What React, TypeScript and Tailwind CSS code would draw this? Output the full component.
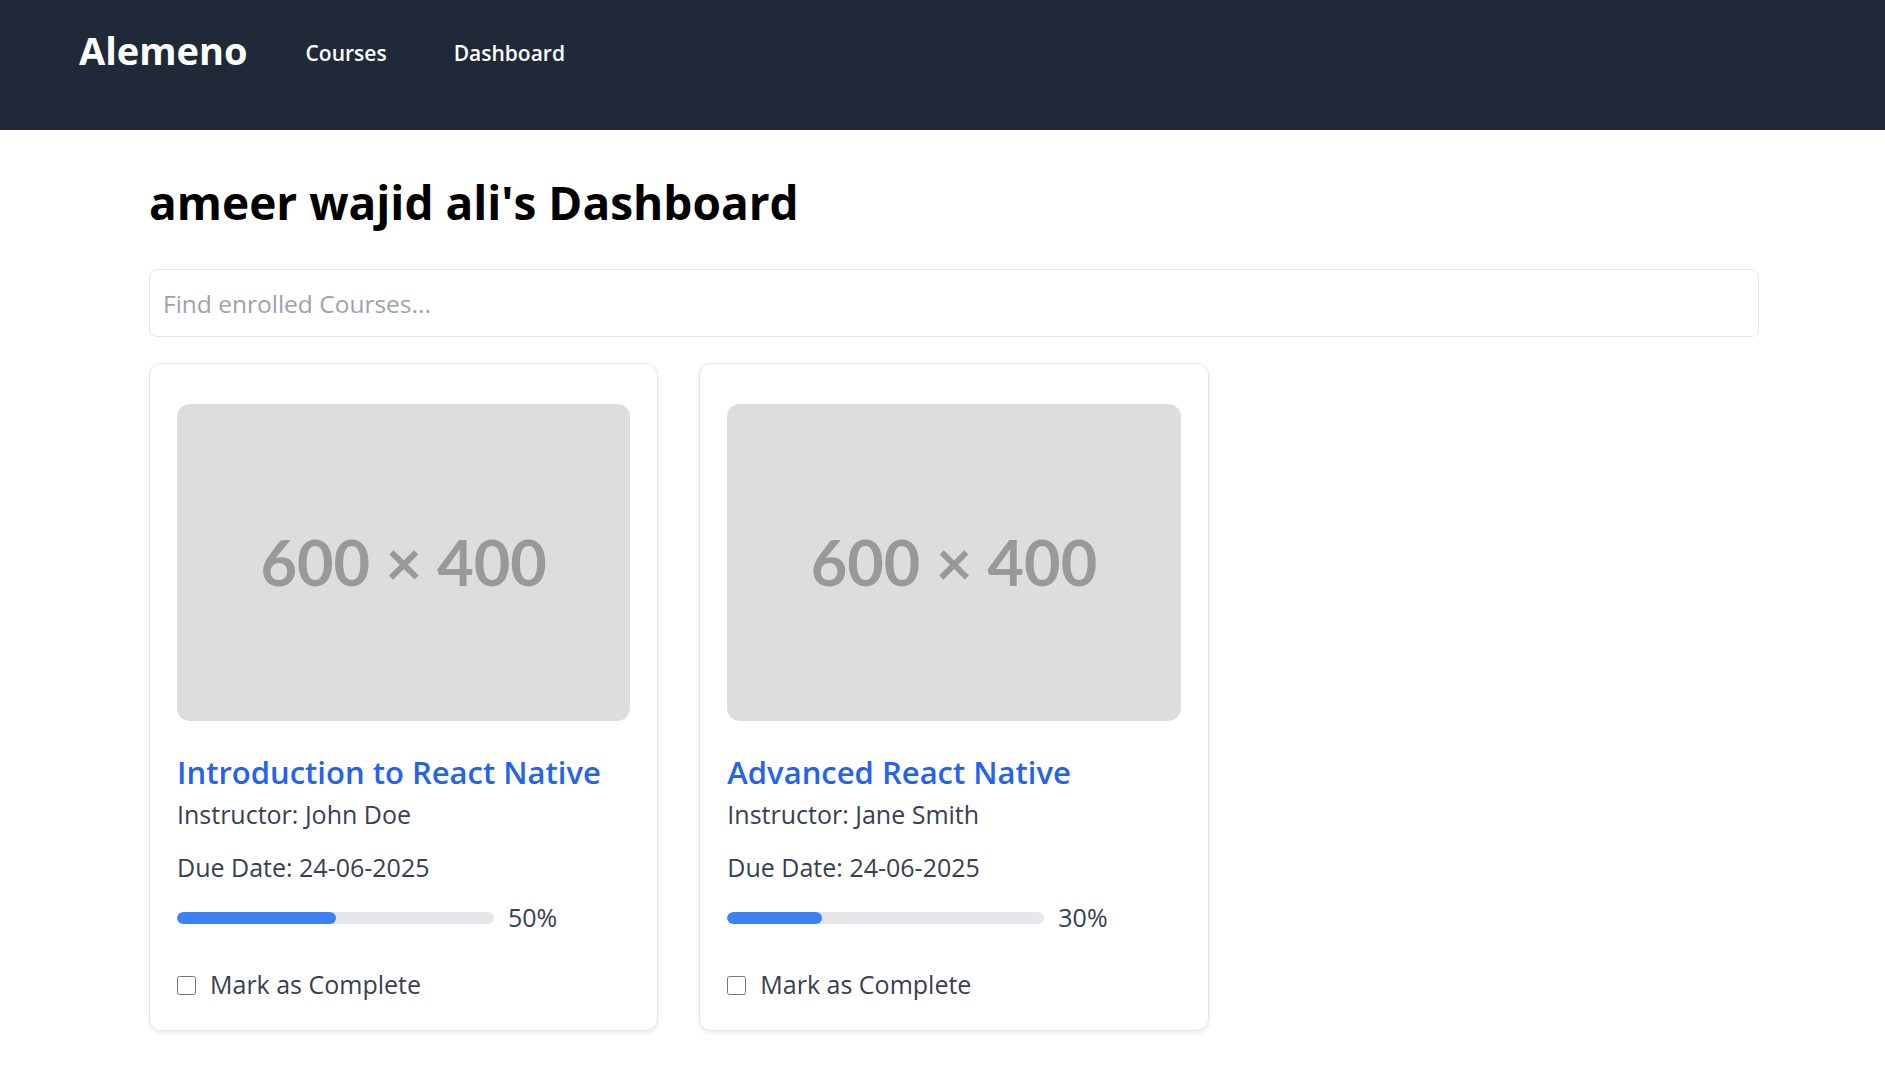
import { useState } from "react";

type Course = {
  id: number;
  title: string;
  instructor: string;
  dueDate: string;
  progress: number;
};

const COURSES: Course[] = [
  {
    id: 1,
    title: "Introduction to React Native",
    instructor: "John Doe",
    dueDate: "24-06-2025",
    progress: 50,
  },
  {
    id: 2,
    title: "Advanced React Native",
    instructor: "Jane Smith",
    dueDate: "24-06-2025",
    progress: 30,
  },
];

const CourseCard = ({ course }: { course: Course }) => {
  const [done, setDone] = useState(false);

  return (
    <div className="flex flex-col rounded-xl border border-[#e5e7eb] bg-white px-[27px] pt-[40px] pb-[29px] shadow-[0_2px_4px_rgba(0,0,0,0.08)]">
      <div className="flex h-[317px] w-full items-center justify-center rounded-[13px] bg-[#dddddd]">
        <span className="font-['Lato',sans-serif] text-[63px] font-bold text-[#999999]">
          600 × 400
        </span>
      </div>
      <h2 className="mt-[31px] text-[31px] leading-[40px] font-semibold text-[#2563eb]">
        {course.title}
      </h2>
      <p className="mt-[6px] text-[25px] leading-[32px] text-[#374151]">
        Instructor: {course.instructor}
      </p>
      <p className="mt-[21px] text-[25px] leading-[32px] text-[#374151]">
        Due Date: {course.dueDate}
      </p>
      <div className="mt-[19px] flex h-[32px] items-center">
        <div className="h-[12px] w-[317px] overflow-hidden rounded-full bg-[#e5e7eb]">
          <div
            className="h-full rounded-full bg-[#3b82f6]"
            style={{ width: `${course.progress}%` }}
          />
        </div>
        <span className="ml-[14px] text-[25px] text-[#374151]">
          {course.progress}%
        </span>
      </div>
      <label className="mt-[35px] flex h-[32px] items-center">
        <input
          type="checkbox"
          checked={done}
          onChange={() => setDone(!done)}
          className="h-[19px] w-[19px]"
        />
        <span className="ml-[14px] text-[25px] text-[#374151]">
          Mark as Complete
        </span>
      </label>
    </div>
  );
};

export default function App() {
  const [query, setQuery] = useState("");

  const filtered = COURSES.filter((c) =>
    c.title.toLowerCase().includes(query.toLowerCase()),
  );

  return (
    <div className="min-h-screen bg-white font-['Open_Sans',sans-serif]">
      <header className="h-[130px] bg-[#1f2937] pl-[79px] text-white">
        <nav className="flex h-[100px] items-center">
          <span className="mr-[58px] text-[38px] font-bold">Alemeno</span>
          <a className="mt-[7px] mr-[67px] text-[21px] font-semibold" href="#">
            Courses
          </a>
          <a className="mt-[7px] text-[21px] font-semibold" href="#">
            Dashboard
          </a>
        </nav>
      </header>

      <main className="pr-[126px] pl-[149px]">
        <h1 className="mt-[42px] text-[46px] leading-[60px] font-bold text-black">
          ameer wajid ali's Dashboard
        </h1>
        <input
          type="text"
          value={query}
          onChange={(e) => setQuery(e.target.value)}
          placeholder="Find enrolled Courses..."
          className="mt-[37px] h-[68px] w-full rounded-lg border border-[#e5e7eb] px-[13px] text-[24.5px] text-[#374151] placeholder:text-[#9ca3af] focus:outline-none"
        />
        <div className="mt-[26px] grid grid-cols-3 gap-[41px] pb-10">
          {filtered.map((course) => (
            <CourseCard key={course.id} course={course} />
          ))}
        </div>
      </main>
    </div>
  );
}
